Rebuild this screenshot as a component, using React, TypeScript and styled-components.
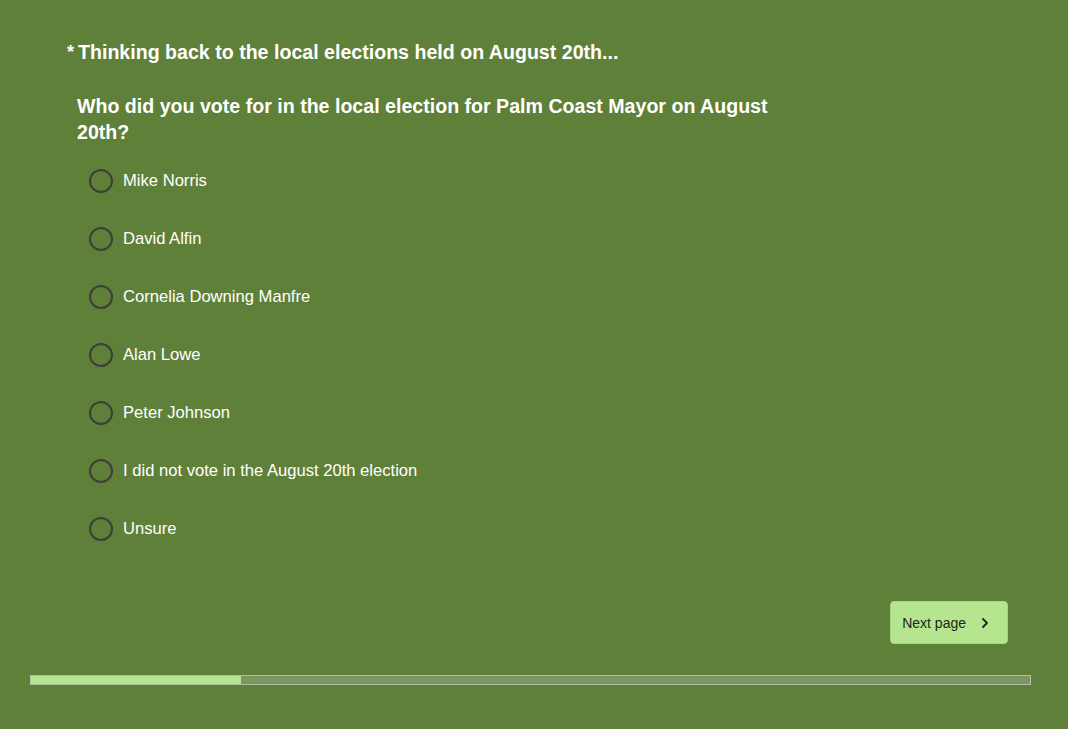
import React from "react";
import styled, { createGlobalStyle } from "styled-components";

const Global = createGlobalStyle`
  html, body { margin: 0; padding: 0; background: #5f8039; }
  body { font-family: "Liberation Sans", Arial, sans-serif; }
`;

const Page = styled.div`
  width: 1068px;
  height: 729px;
  box-sizing: border-box;
  padding: 40px 30px 0 30px;
  display: flex;
  flex-direction: column;
  color: #fff;
`;

const Content = styled.div`
  padding-left: 36px;
`;

const Title = styled.h1`
  margin: 0;
  font-size: 19.6px;
  font-weight: 700;
  line-height: 24px;
  display: flex;
  align-items: baseline;
`;

const Star = styled.span`
  margin-right: 4px;
  margin-left: 1px;
  font-size: 18px;
  position: relative;
  top: -1px;
`;

const Question = styled.h2`
  margin: 28px 0 0 11px;
  max-width: 710px;
  font-size: 19.6px;
  font-weight: 700;
  line-height: 26px;
`;

const Options = styled.div`
  margin: 24px 0 0 23px;
  display: flex;
  flex-direction: column;
  gap: 34px;
`;

const Option = styled.label`
  display: flex;
  align-items: center;
  gap: 10px;
  height: 24px;
  font-size: 16.6px;
  cursor: pointer;
`;

const Radio = styled.span`
  width: 20px;
  height: 20px;
  border: 2px solid #3b3f38;
  border-radius: 50%;
  flex: none;
`;

const Footer = styled.div`
  display: flex;
  justify-content: flex-end;
  margin-top: 60px;
  padding-right: 30px;
`;

const NextButton = styled.button`
  display: flex;
  align-items: center;
  gap: 14px;
  height: 43px;
  padding: 0 17px 0 11px;
  background: #b5e68f;
  border: 1px solid #a6d882;
  border-radius: 4px;
  font-family: "Liberation Sans", Arial, sans-serif;
  font-size: 14px;
  color: #1d241a;
  cursor: pointer;
`;

const Progress = styled.div`
  margin-top: 31px;
  height: 10px;
  width: 1001px;
  box-sizing: border-box;
  border: 1px solid #b3bda9;
  background: #7d9661;
  display: flex;
`;

const ProgressFill = styled.div`
  height: 100%;
  background: #b5e68f;
`;

const options = [
  "Mike Norris",
  "David Alfin",
  "Cornelia Downing Manfre",
  "Alan Lowe",
  "Peter Johnson",
  "I did not vote in the August 20th election",
  "Unsure",
];

export default function App() {
  const progress = 21;
  return (
    <>
      <Global />
      <Page>
        <Content>
          <Title>
            <Star>*</Star>Thinking back to the local elections held on August 20th...
          </Title>
          <Question>
            Who did you vote for in the local election for Palm Coast Mayor on August 20th?
          </Question>
          <Options>
            {options.map((o) => (
              <Option key={o}>
                <Radio />
                {o}
              </Option>
            ))}
          </Options>
        </Content>
        <Footer>
          <NextButton>
            Next page
            <svg width="10" height="12" viewBox="0 0 10 12" fill="none">
              <path d="M3 2 L7 6 L3 10" stroke="#1d241a" strokeWidth="1.8" strokeLinecap="round" strokeLinejoin="round" />
            </svg>
          </NextButton>
        </Footer>
        <Progress>
          <ProgressFill style={{ width: `${progress}%` }} />
        </Progress>
      </Page>
    </>
  );
}
